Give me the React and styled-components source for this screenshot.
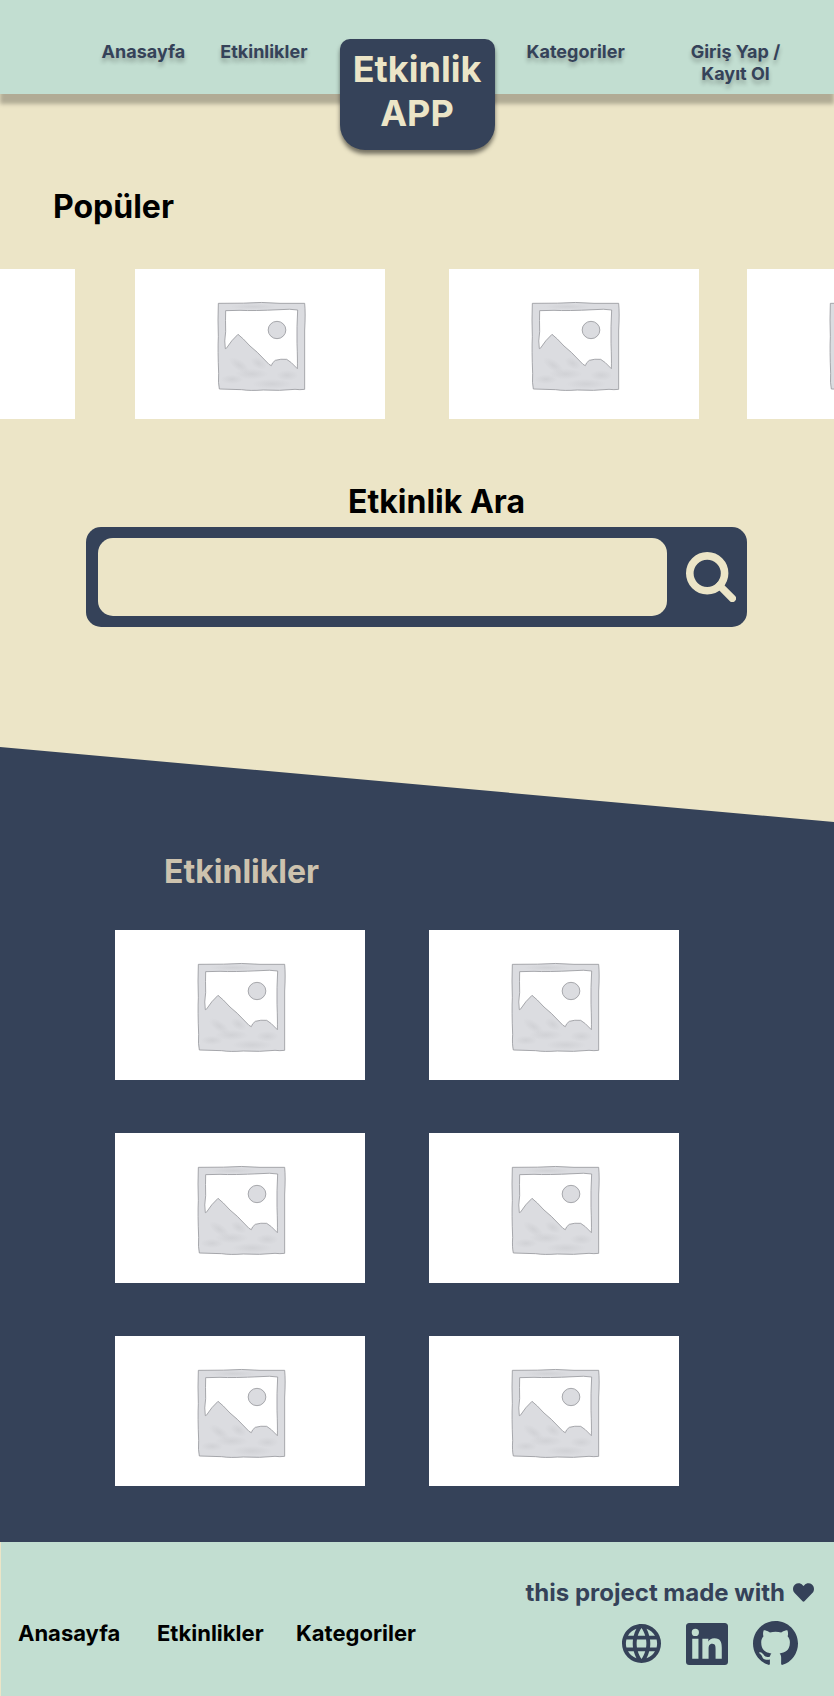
import React from "react";
import styled, { createGlobalStyle } from "styled-components";
import { BsGithub } from "react-icons/bs";
import { FaHeart } from "react-icons/fa";

const navy = "#354259";
const sand = "#cdc2ae";
const cream = "#ece5c7";
const mint = "#c2ded1";

const GlobalStyle = createGlobalStyle`
  *, *::before, *::after { box-sizing: border-box; }
  body {
    margin: 0;
    background: ${cream};
    color: #000;
    font-family: Inter, "Liberation Sans", sans-serif;
    font-weight: 700;
    overflow-x: hidden;
  }
  a { color: inherit; text-decoration: none; }
  ul { list-style: none; margin: 0; padding: 0; }
`;

const Header = styled.header`
  display: grid;
  grid-template-columns: 1fr 155px 1fr;
  align-items: start;
  height: 94px;
  padding-top: 39px;
  background: ${mint};
  box-shadow: 0 10px 4px rgba(0, 0, 0, 0.25);
`;

const HeaderNav = styled.nav`
  display: flex;
  justify-content: ${(p) => (p.$side === "left" ? "flex-end" : "flex-start")};
  gap: ${(p) => (p.$side === "left" ? 35 : 66)}px;
  padding: 2px 32px 0;
`;

const HeaderLink = styled.a`
  color: ${navy};
  font-size: 18px;
  line-height: 22px;
  text-align: center;
  text-shadow: 0 4px 4px rgba(0, 0, 0, 0.25);
`;

const Logo = styled.a`
  padding: 8px 0 15px;
  border-radius: 10px 10px 25px 25px;
  background: ${navy};
  box-shadow: 0 4px 4px rgba(0, 0, 0, 0.5);
  font-size: 36px;
  line-height: 44px;
  text-align: center;

  && { color: ${cream}; }
`;

const Title = styled.h2`
  margin: 0;
  font-size: 32px;
  line-height: 39px;
`;

const Popular = styled.section`
  padding-top: 93px;

  ${Title} { padding-left: 53px; }
`;

const Slides = styled.ul`
  display: flex;
  justify-content: center;
  margin-top: 43px;
  padding-right: 12px;
  overflow: hidden;
`;

const Slide = styled.li`
  flex: none;
  width: 250px;
  margin-left: ${(p) => p.$space}px;
`;

const Card = styled.a`
  display: block;
  height: 150px;
  background: #fff;

  svg { display: block; width: 100%; height: 100%; }
`;

const Search = styled.section`
  padding: 63px 87px 120px 86px;

  ${Title} {
    padding-left: 40px;
    text-align: center;
  }
`;

const SearchForm = styled.form`
  display: flex;
  align-items: center;
  gap: 19px;
  margin-top: 6px;
  padding: 11px 11px 11px 12px;
  border-radius: 15px;
  background: ${navy};
`;

const SearchInput = styled.input`
  flex: 1;
  min-width: 0;
  height: 78px;
  padding: 0 20px;
  border: 0;
  border-radius: 15px;
  background: ${cream};
  color: ${navy};
  font: inherit;
  font-size: 24px;
`;

const SearchButton = styled.button`
  flex: none;
  width: 50px;
  height: 50px;
  padding: 0;
  border: 0;
  background: none;
  color: ${cream};
  cursor: pointer;

  svg { display: block; }
`;

const Events = styled.section`
  padding: 105px 40px 56px 0;
  background: ${navy};
  clip-path: polygon(0 0, 100% 75px, 100% 100%, 0 100%);

  ${Title} {
    padding-left: 49px;
    color: ${sand};
  }
`;

const EventsInner = styled.div`
  max-width: 564px;
  margin: 0 auto;
`;

const EventGrid = styled.ul`
  display: grid;
  grid-template-columns: repeat(2, 1fr);
  gap: 53px 64px;
  margin-top: 39px;
`;

const Footer = styled.footer`
  display: flex;
  justify-content: space-between;
  align-items: flex-start;
  padding: 36px 20px 32px 17px;
  border-left: 1px solid ${cream};
  background: ${mint};
`;

const FooterNav = styled.nav`
  display: flex;
  gap: 29px;
  padding-top: 42px;
`;

const FooterLink = styled.a`
  min-width: 110px;
  font-size: 22px;
  line-height: 27px;
`;

const Credits = styled.div`
  color: ${navy};
`;

const CreditLine = styled.p`
  display: flex;
  align-items: center;
  gap: 8px;
  margin: 0;
  font-size: 24px;
  line-height: 29px;
`;

const Socials = styled.div`
  display: flex;
  justify-content: flex-end;
  align-items: center;
  gap: 25px;
  margin-top: 14px;
  padding-right: 16px;

  a, svg { display: block; }
`;

function Placeholder() {
  return (
    <svg viewBox="-195 -63 750 450" role="img" aria-label="Etkinlik görseli">
      <defs>
        <radialGradient id="smudge">
          <stop offset="0" stopColor="#c4c5c9" stopOpacity="0.450" />
          <stop offset="1" stopColor="#c4c5c9" stopOpacity="0" />
        </radialGradient>
      </defs>
      <g fill="#dbdce0" stroke="#98999e" strokeWidth="2.500" strokeLinejoin="round">
        <path
          fillRule="evenodd"
          d="M55 40 L130 39.500 Q185 35 240 40 L314 40 Q317 70 314 120 L314 298 Q300 300 285 298 Q240 303 190 300 Q150 303 125 299 L58 297 Q54 280 56 250 Q53 180 55 140 Q53 90 55 40 Z
             M77 62 Q76 90 77 125 Q72 155 76 176 L79 175 Q95 150 114 133 L130 147 L150 168 L172 187 L207 223 L214 227 Q216 218 226 211 Q242 206 260 208 L274 218 L292 236 Q293 210 291 160 Q290 110 293 60 Q270 56 240 59 Q160 63 120 61 Z"
        />
        <ellipse cx="231" cy="120" rx="26.500" ry="26" />
      </g>
      <g fill="url(#smudge)">
        <ellipse cx="118" cy="226" rx="36" ry="16" transform="rotate(35 118 226)" />
        <ellipse cx="176" cy="220" rx="26" ry="16" transform="rotate(30 176 220)" />
        <ellipse cx="155" cy="252" rx="50" ry="16" />
        <ellipse cx="96" cy="268" rx="34" ry="14" />
        <ellipse cx="216" cy="282" rx="60" ry="15" />
        <ellipse cx="262" cy="256" rx="34" ry="16" />
        <ellipse cx="160" cy="50" rx="70" ry="9" />
      </g>
    </svg>
  );
}

function SearchIcon() {
  return (
    <svg width="50" height="50" viewBox="0 0 50 50" fill="none" stroke="currentColor" aria-hidden="true">
      <circle cx="21.200" cy="21.300" r="17.400" strokeWidth="7.600" />
      <path d="M33.500 33.500 L46.300 46.300" strokeWidth="7.400" strokeLinecap="round" />
    </svg>
  );
}

function GlobeIcon() {
  return (
    <svg width="39" height="39" viewBox="2 2 20 20" fill="currentColor" aria-hidden="true">
      <path d="M16.360 14c.08-.66.14-1.320.14-2s-.06-1.340-.14-2h3.380c.16.640.26 1.310.26 2s-.1 1.360-.26 2m-5.150 5.560c.6-1.110 1.060-2.310 1.380-3.560h2.950a8.030 8.030 0 0 1-4.330 3.560M14.340 14H9.660c-.1-.66-.16-1.320-.16-2s.06-1.350.16-2h4.680c.09.650.16 1.320.16 2s-.07 1.340-.16 2M12 19.960c-.83-1.200-1.500-2.530-1.910-3.960h3.820c-.41 1.430-1.080 2.760-1.910 3.960M8 8H5.080A7.920 7.920 0 0 1 9.400 4.440C8.800 5.550 8.350 6.750 8 8m-2.920 8H8c.35 1.250.8 2.450 1.400 3.560A8 8 0 0 1 5.080 16m-.82-2C4.100 13.360 4 12.690 4 12s.1-1.360.26-2h3.380c-.08.66-.14 1.320-.14 2s.06 1.340.14 2M12 4.030c.83 1.200 1.500 2.540 1.910 3.970h-3.820c.41-1.430 1.080-2.770 1.910-3.970M18.920 8h-2.950a15.700 15.700 0 0 0-1.380-3.560c1.840.63 3.370 1.900 4.330 3.560M12 2C6.470 2 2 6.500 2 12a10 10 0 0 0 10 10 10 10 0 0 0 10-10A10 10 0 0 0 12 2" />
    </svg>
  );
}

function LinkedinIcon() {
  return (
    <svg width="42" height="42" viewBox="0 0 24 24" fill="currentColor" aria-hidden="true">
      <path d="M20.447 20.452h-3.554v-5.569c0-1.328-.027-3.037-1.852-3.037-1.853 0-2.136 1.445-2.136 2.939v5.667H9.351V9h3.414v1.561h.046c.477-.9 1.637-1.850 3.370-1.850 3.601 0 4.267 2.370 4.267 5.455v6.286zM5.337 7.433a2.062 2.062 0 0 1-2.063-2.065 2.064 2.064 0 1 1 2.063 2.065zm1.782 13.019H3.555V9h3.564v11.452zM22.225 0H1.771C.792 0 0 .774 0 1.729v20.542C0 23.227.792 24 1.771 24h20.451C23.200 24 24 23.227 24 22.271V1.729C24 .774 23.200 0 22.222 0h.003z" />
    </svg>
  );
}

const slideSpaces = [0, 60, 64, 48];
const events = [1, 2, 3, 4, 5, 6];

export default function App() {
  return (
    <>
      <GlobalStyle />
      <Header>
        <HeaderNav $side="left">
          <HeaderLink href="#anasayfa">Anasayfa</HeaderLink>
          <HeaderLink href="#etkinlikler">Etkinlikler</HeaderLink>
        </HeaderNav>
        <Logo href="#anasayfa">
          Etkinlik
          <br />
          APP
        </Logo>
        <HeaderNav $side="right">
          <HeaderLink href="#kategoriler">Kategoriler</HeaderLink>
          <HeaderLink href="#giris">
            Giriş Yap /<br />
            Kayıt Ol
          </HeaderLink>
        </HeaderNav>
      </Header>

      <main>
        <Popular>
          <Title>Popüler</Title>
          <Slides>
            {slideSpaces.map((space, i) => (
              <Slide key={i} $space={space}>
                <Card href="#etkinlik">
                  <Placeholder />
                </Card>
              </Slide>
            ))}
          </Slides>
        </Popular>

        <Search>
          <Title>
            <label htmlFor="search">Etkinlik Ara</label>
          </Title>
          <SearchForm role="search" onSubmit={(e) => e.preventDefault()}>
            <SearchInput id="search" type="text" />
            <SearchButton type="submit" aria-label="Ara">
              <SearchIcon />
            </SearchButton>
          </SearchForm>
        </Search>

        <Events id="etkinlikler">
          <EventsInner>
            <Title>Etkinlikler</Title>
            <EventGrid>
              {events.map((id) => (
                <li key={id}>
                  <Card href={`#etkinlik-${id}`}>
                    <Placeholder />
                  </Card>
                </li>
              ))}
            </EventGrid>
          </EventsInner>
        </Events>
      </main>

      <Footer>
        <FooterNav>
          <FooterLink href="#anasayfa">Anasayfa</FooterLink>
          <FooterLink href="#etkinlikler">Etkinlikler</FooterLink>
          <FooterLink href="#kategoriler">Kategoriler</FooterLink>
        </FooterNav>
        <Credits>
          <CreditLine>
            this project made with
            <FaHeart size={21} aria-hidden="true" />
          </CreditLine>
          <Socials>
            <a href="#web" aria-label="Web">
              <GlobeIcon />
            </a>
            <a href="#linkedin" aria-label="LinkedIn">
              <LinkedinIcon />
            </a>
            <a href="#github" aria-label="GitHub">
              <BsGithub size={45} />
            </a>
          </Socials>
        </Credits>
      </Footer>
    </>
  );
}
